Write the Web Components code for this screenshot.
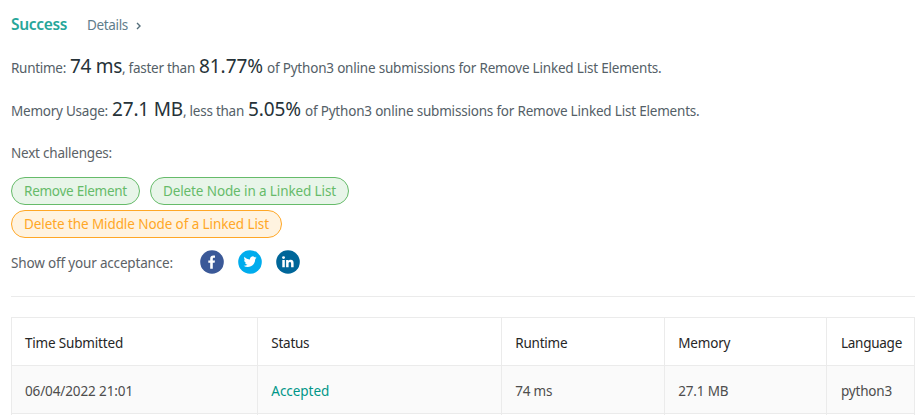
<!DOCTYPE html>
<html lang="en">
<head>
<meta charset="utf-8">
<title>Submission result</title>
<style>
html,body{margin:0;background:#fff}
body{height:415px;overflow:hidden;font-family:"Noto Sans","Open Sans",sans-serif}
</style>
</head>
<body>
<submission-page></submission-page>
<script>
/* Text run tracked to a given measure in pixels. */
class FitText extends HTMLElement{
  connectedCallback(){
    const root=this.attachShadow({mode:'open'});
    root.innerHTML='<style>:host{display:block;flex:none;white-space:pre}span{display:inline-block}</style><span><slot></slot></span>';
    const w=+this.getAttribute('w'),s=root.querySelector('span');
    const n=this.textContent.length;
    const natural=s.getBoundingClientRect().width;
    s.style.letterSpacing=((w-natural)/n).toFixed(4)+'px';
    this.style.width=w+'px';
  }
}

class StatLine extends HTMLElement{
  connectedCallback(){
    this.attachShadow({mode:'open'}).innerHTML=`<style>
      :host{display:flex;align-items:baseline;height:43px;line-height:43px;font-size:13.5px;color:#546067}
    </style><slot></slot>`;
  }
}

class ChallengePill extends HTMLElement{
  connectedCallback(){
    this.attachShadow({mode:'open'}).innerHTML=`<style>
      :host{display:block;box-sizing:border-box;height:28px;line-height:26px;padding:0 12px;border:1px solid #66bb6a;border-radius:14px;background:#e8f5e9;color:#66bb6a;font-size:13.5px}
      :host([level=medium]){border-color:#ffa726;background:#fff3e0;color:#ffa726}
    </style><slot></slot>`;
  }
}

class ShareIcon extends HTMLElement{
  connectedCallback(){
    const glyph={
      facebook:['#3b5998','<path fill="#fff" d="M10.200 18.800v-6H8.300v-2.400h1.900V8.800c0-2.100 1.200-3.200 3.100-3.200.9 0 1.700.1 1.700.1v2.100h-1c-1 0-1.200.5-1.200 1.200v1.400h2.200l-.4 2.400h-1.800v6z"/>'],
      twitter:['#00aced','<path fill="#fff" d="M18.600 7.500c-.5.2-1 .4-1.500.4.5-.3 1-.8 1.200-1.400-.5.300-1.100.500-1.700.700A2.700 2.700 0 0 0 12 9.600C9.800 9.500 7.800 8.500 6.500 6.800c-.7 1.300-.3 2.800.8 3.600-.4 0-.8-.1-1.200-.3 0 1.300.900 2.400 2.100 2.600-.4.100-.8.100-1.200.1.300 1.100 1.300 1.800 2.500 1.900A5.400 5.400 0 0 1 5.600 15.800c1.200.8 2.600 1.200 4.100 1.200 5 0 7.700-4.200 7.600-8.100.5-.4 1-.9 1.300-1.400z"/>'],
      linkedin:['#006699','<path fill="#fff" d="M6.300 9.900h2.500v7.400H6.300zM10.100 9.900h2.400v1c.4-.7 1.200-1.200 2.200-1.200 2.300 0 2.900 1.500 2.900 3.500v4.100h-2.500v-3.600c0-.9-.1-1.800-1.200-1.800s-1.300.8-1.300 1.700v3.700h-2.500z"/><circle cx="7.550" cy="7.600" r="1.450" fill="#fff"/>']
    }[this.getAttribute('name')];
    this.attachShadow({mode:'open'}).innerHTML=`<style>:host{display:block;width:24px;height:24px}svg{display:block}</style>
    <svg width="24" height="24" viewBox="0 0 24 24"><circle cx="12" cy="12" r="11.800" fill="${glyph[0]}"/>${glyph[1]}</svg>`;
  }
}

class SubmissionTable extends HTMLElement{
  connectedCallback(){
    this.attachShadow({mode:'open'}).innerHTML=`<style>
      :host{display:block;box-sizing:border-box;overflow:hidden;width:904px;height:98px;border:1px solid #ebebeb;border-bottom:0;font-size:13.500px}
      .row{display:grid;grid-template-columns:246px 244px 163px 162px 87px;height:48px;box-sizing:border-box;border-bottom:1px solid #ebebeb}
      .row>div{padding-left:13.300px;border-right:1px solid #ebebeb;line-height:50px;height:47px}
      .row>div:first-child{padding-left:13px}
      .row>div:last-child{border-right:0;padding-left:14px}
      .head{color:#262626}
      .data{background:#fafafa;color:#4d4d4d}
      .ok{color:#009688}
    </style>
    <div class="row head"><div><fit-text w="98">Time Submitted</fit-text></div><div><fit-text w="38">Status</fit-text></div><div><fit-text w="52">Runtime</fit-text></div><div><fit-text w="52">Memory</fit-text></div><div><fit-text w="61">Language</fit-text></div></div>
    <div class="row data"><div><fit-text w="108">06/04/2022 21:01</fit-text></div><div class="ok"><fit-text w="58">Accepted</fit-text></div><div><fit-text w="37">74 ms</fit-text></div><div><fit-text w="50">27.1 MB</fit-text></div><div><fit-text w="51">python3</fit-text></div></div>
    <div class="row"><div></div><div></div><div></div><div></div><div></div></div>`;
  }
}

class SubmissionPage extends HTMLElement{
  connectedCallback(){
    this.attachShadow({mode:'open'}).innerHTML=`<style>
      :host{display:block;box-sizing:border-box;width:922px;height:415px;padding:9px 0 0 11px;font-size:13.500px}
      .top{display:flex;align-items:baseline;height:36px;line-height:30px}
      .success{font-size:15.500px;font-weight:600;color:#26a69a}
      .details{margin-left:20px;color:#607d8b}
      .chev{margin-left:8px}
      .big{font-size:19px;color:#263238}
      .g4{margin-left:4px}
      .next{height:46px;line-height:44px;color:#5c6266}
      .pills{display:flex;flex-wrap:wrap;gap:5px 10px;width:360px}
      .share{display:flex;align-items:center;height:48px;color:#5c6266}
      .share>fit-text{padding-top:2px}
      .icons{display:flex;gap:14px;margin-left:27px}
      hr{margin:10px 0 20px;width:904px;height:1px;border:0;background:#ebebeb}
    </style>
    <div class="top"><fit-text class="success" w="56">Success</fit-text><fit-text class="details" w="41">Details</fit-text><svg class="chev" width="6" height="8" viewBox="0 0 6 8"><path d="M1 1l3 3-3 3" fill="none" stroke="#546e7a" stroke-width="1.400"/></svg></div>
    <stat-line><fit-text w="55">Runtime:</fit-text><fit-text class="big g4" w="52">74 ms</fit-text><fit-text w="73">, faster than</fit-text><fit-text class="big g4" w="64">81.77%</fit-text><fit-text class="g4" w="394.500">of Python3 online submissions for Remove Linked List Elements.</fit-text></stat-line>
    <stat-line><fit-text w="97">Memory Usage:</fit-text><fit-text class="big g4" w="71">27.1 MB</fit-text><fit-text w="61">, less than</fit-text><fit-text class="big g4" w="53">5.05%</fit-text><fit-text class="g4" w="394.500">of Python3 online submissions for Remove Linked List Elements.</fit-text></stat-line>
    <div class="next"><fit-text w="101">Next challenges:</fit-text></div>
    <div class="pills"><challenge-pill><fit-text w="103">Remove Element</fit-text></challenge-pill><challenge-pill><fit-text w="173">Delete Node in a Linked List</fit-text></challenge-pill><challenge-pill level="medium"><fit-text w="245">Delete the Middle Node of a Linked List</fit-text></challenge-pill></div>
    <div class="share"><fit-text w="162">Show off your acceptance:</fit-text><div class="icons"><share-icon name="facebook"></share-icon><share-icon name="twitter"></share-icon><share-icon name="linkedin"></share-icon></div></div>
    <hr>
    <submission-table></submission-table>`;
  }
}
customElements.define('stat-line',StatLine);
customElements.define('challenge-pill',ChallengePill);
customElements.define('share-icon',ShareIcon);
customElements.define('submission-table',SubmissionTable);
customElements.define('submission-page',SubmissionPage);
customElements.define('fit-text',FitText);
</script>
</body>
</html>
